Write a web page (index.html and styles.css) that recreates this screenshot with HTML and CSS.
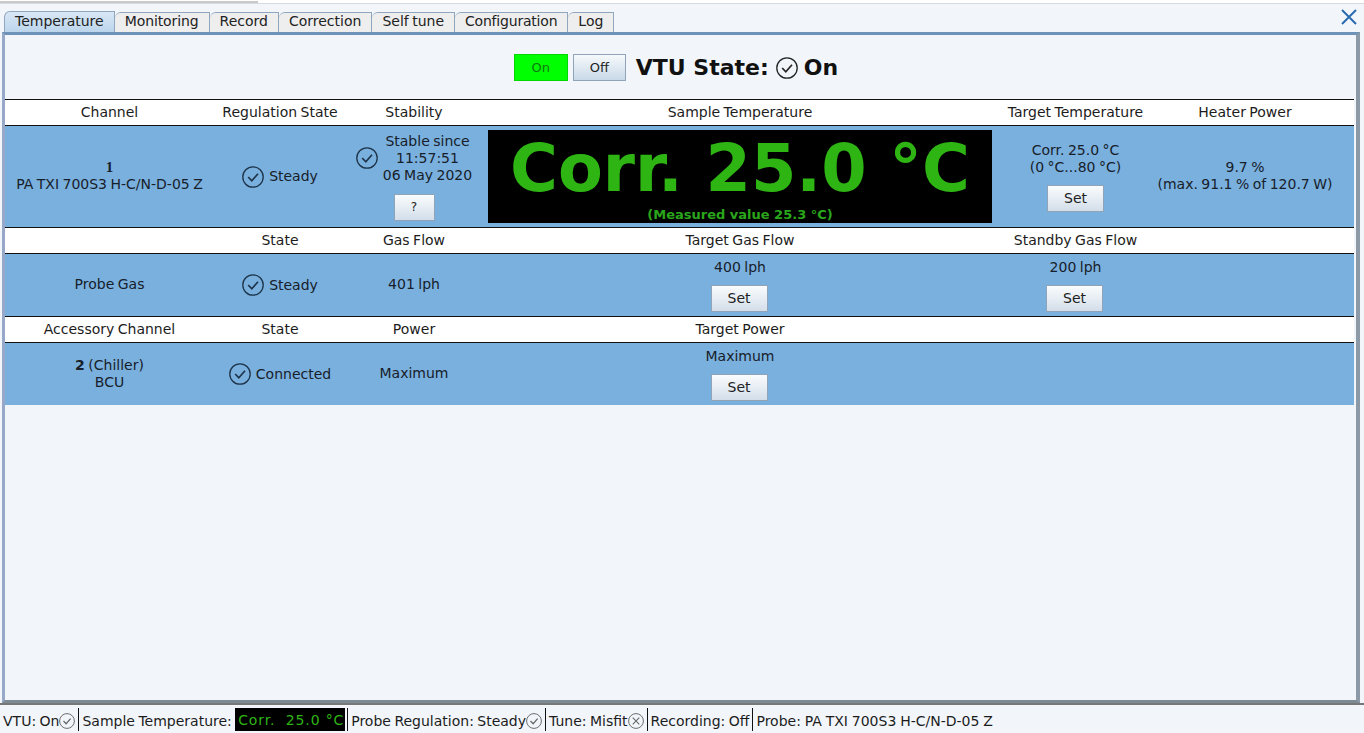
FILE: index.html
```html
<!DOCTYPE html>
<html lang="en">
<head>
    <meta charset="UTF-8">
    <title>VTU Control</title>
    <link rel="stylesheet" href="styles.css">
</head>
<body>
    <svg class="defs" width="0" height="0">
        <symbol id="ok" viewBox="0 0 22 22">
            <circle cx="11" cy="11" r="10.2" fill="none" stroke="currentColor" stroke-width="1.3"/>
            <path d="M6.2 11 L9.8 14.8 L16 7.8" fill="none" stroke="currentColor" stroke-width="1.7"/>
        </symbol>
        <symbol id="bad" viewBox="0 0 22 22">
            <circle cx="11" cy="11" r="10.2" fill="none" stroke="currentColor" stroke-width="1.3"/>
            <path d="M6.5 6.5 L15.5 15.5 M15.5 6.5 L6.5 15.5" fill="none" stroke="currentColor" stroke-width="1.5"/>
        </symbol>
    </svg>

    <div class="top-strip"></div>

    <nav class="tabs">
        <div class="tab active">Temperature</div>
        <div class="tab tab-mon">Monitoring</div>
        <div class="tab">Record</div>
        <div class="tab">Correction</div>
        <div class="tab">Self tune</div>
        <div class="tab tab-narrow">Configuration</div>
        <div class="tab">Log</div>
        <svg class="close" width="16" height="16" viewBox="0 0 16 16">
            <path d="M1 1 L15 15 M15 1 L1 15" stroke="#2a6cb0" stroke-width="2" fill="none"/>
        </svg>
    </nav>

    <main class="pane">
        <div class="state-bar">
            <button class="btn btn-on" type="button">On</button>
            <button class="btn btn-off" type="button">Off</button>
            <div class="vtu-state">VTU State: <svg class="icon-state"><use href="#ok"/></svg> On</div>
        </div>

        <div class="row head">
            <div>Channel</div>
            <div>Regulation State</div>
            <div>Stability</div>
            <div>Sample Temperature</div>
            <div>Target Temperature</div>
            <div>Heater Power</div>
        </div>
        <div class="row body body-main">
            <div class="plain"><b class="serif-num">1</b><br>PA TXI 700S3 H-C/N-D-05 Z</div>
            <div class="with-icon"><svg class="icon"><use href="#ok"/></svg>Steady</div>
            <div class="stack">
                <div class="stability">
                    <svg class="icon"><use href="#ok"/></svg>
                    <div>Stable since<br>11:57:51<br>06 May 2020</div>
                </div>
                <button class="btn btn-q" type="button">?</button>
            </div>
            <div class="display">
                <div class="display-big">Corr. 25.0 °C</div>
                <div class="display-small">(Measured value 25.3 °C)</div>
            </div>
            <div class="stack">
                <div>Corr. 25.0 °C<br>(0 °C...80 °C)</div>
                <button class="btn btn-set" type="button">Set</button>
            </div>
            <div class="plain">9.7 %<br>(max. 91.1 % of 120.7 W)</div>
        </div>

        <div class="row head">
            <div></div>
            <div>State</div>
            <div>Gas Flow</div>
            <div>Target Gas Flow</div>
            <div>Standby Gas Flow</div>
            <div></div>
        </div>
        <div class="row body body-sub">
            <div class="plain">Probe Gas</div>
            <div class="with-icon"><svg class="icon"><use href="#ok"/></svg>Steady</div>
            <div class="plain">401 lph</div>
            <div class="stack">
                <div>400 lph</div>
                <button class="btn btn-set" type="button">Set</button>
            </div>
            <div class="stack">
                <div>200 lph</div>
                <button class="btn btn-set" type="button">Set</button>
            </div>
            <div></div>
        </div>

        <div class="row head">
            <div>Accessory Channel</div>
            <div>State</div>
            <div>Power</div>
            <div>Target Power</div>
            <div></div>
            <div></div>
        </div>
        <div class="row body body-sub">
            <div><b>2</b> (Chiller)<br>BCU</div>
            <div class="with-icon"><svg class="icon"><use href="#ok"/></svg>Connected</div>
            <div class="plain">Maximum</div>
            <div class="stack">
                <div>Maximum</div>
                <button class="btn btn-set" type="button">Set</button>
            </div>
            <div></div>
            <div></div>
        </div>
    </main>

    <footer class="status">
        <div class="cell">VTU: On<svg class="icon-small"><use href="#ok"/></svg></div>
        <div class="cell">Sample Temperature: <span class="mini-display">Corr.&nbsp; 25.0 °C</span></div>
        <div class="cell">Probe Regulation: Steady<svg class="icon-small"><use href="#ok"/></svg></div>
        <div class="cell">Tune: Misfit<svg class="icon-small"><use href="#bad"/></svg></div>
        <div class="cell">Recording: Off</div>
        <div class="cell">Probe: PA TXI 700S3 H-C/N-D-05 Z</div>
    </footer>
</body>
</html>
```

FILE: styles.css
```css
html, body { margin: 0; height: 100%; }
body { width: 1364px; height: 733px; overflow: hidden; background-color: #F2F6FA; color: #1c1c1c; font-family: "DejaVu Sans", sans-serif; font-size: 14px; word-spacing: -1px; display: flex; flex-direction: column; }
.defs { position: absolute; }

.top-strip { height: 4px; background: linear-gradient(#c9c9c9, #c9c9c9) no-repeat 0 1px / 258px 2px, #fff; border-bottom: 1px solid #d5dade; box-sizing: border-box; flex: none; }

.tabs { height: 28px; display: flex; align-items: flex-end; padding-left: 4px; flex: none; position: relative; box-sizing: border-box; }
.tab { height: 19px; padding: 0 10px; line-height: 17px; background: #EEEEEE; border: 1px solid #8fa6bd; border-bottom: none; border-left: none; border-top-left-radius: 6px; color: #222; }
.tab.active { height: 20px; background: linear-gradient(#d9e7f5, #bcd5ec); border-left: 1px solid #8fa6bd; line-height: 19px; padding: 0 10px; }
.tab-mon { letter-spacing: -0.1px; }
.tab-narrow { letter-spacing: -0.2px; }
.close { position: absolute; right: 7px; top: 5px; }

.pane { flex: none; height: 671px; margin: 0 4px 0 2px; box-sizing: border-box; border-style: solid; border-width: 3px 4px 3px 3px; border-color: #6f93b8 #8b9aa6 #7d8a94 #98a8c8; }

.state-bar { height: 64px; display: flex; align-items: center; justify-content: center; padding: 1px 9px 0 0; box-sizing: border-box; }
.btn { font-family: inherit; font-size: 13px; color: #222; border: 1px solid #8fa4b8; padding: 0; background: linear-gradient(#fafcfd, #d3deea); }
.btn-on { width: 54px; height: 27px; background: #00FF00; border-color: #00d800; color: #0f7a0f; }
.btn-off { width: 53px; height: 27px; margin-left: 5px; background: linear-gradient(#f6f9fb, #c9d9e8); }
.vtu-state { margin-left: 10px; font-size: 22px; font-weight: bold; color: #111; word-spacing: 0; display: flex; align-items: center; gap: 6px; }
.icon-state { width: 22px; height: 22px; color: #222; margin-left: 1px; }

.row { display: grid; grid-template-columns: 209px 132px 136px 516px 155px 184px 17px; text-align: center; align-items: center; border-top: 1px solid #111; line-height: 17px; margin-right: 2px; }
.head { height: 24px; padding-bottom: 1px; background: #FFFFFF; }
.body { background-color: #7AB0DE; color: #17202a; }
.body-main { height: 101px; }
.body-sub { height: 62px; }
.body-sub .btn-set { margin-right: 2px; }

.plain { margin-bottom: 2px; }
.serif-num { font-family: "Liberation Serif", serif; font-size: 15px; }
.with-icon { display: flex; justify-content: center; align-items: center; gap: 5px; }
.icon { width: 22px; height: 22px; color: #1d3348; flex: none; }

.stability { display: flex; align-items: center; gap: 5px; }
.btn-q { width: 41px; height: 27px; margin-top: 10px; font-size: 12px; }

.display { margin: 0 6px; height: 93px; background: #000; color: #2EB514; overflow: hidden; word-spacing: 0; }
.display-big { font-size: 65.3px; font-weight: bold; line-height: 76px; white-space: nowrap; }
.display-small { font-size: 13px; font-weight: bold; line-height: 17px; color: #2aa61c; }

.stack { display: flex; flex-direction: column; align-items: center; }
.btn-set { width: 57px; height: 27px; margin-top: 9px; font-size: 14px; }

.status { flex: none; display: flex; align-items: flex-end; height: 29px; padding: 0 0 1px 3px; border-top: 2px solid #777; box-sizing: border-box; }
.cell { display: flex; align-items: center; white-space: pre; height: 23px; box-sizing: border-box; padding: 2px 3px 0 3px; border-right: 1px solid #111; }
.cell:first-child { padding-left: 0; }
.cell:last-child { border-right: none; word-spacing: -0.6px; }
.icon-small { width: 16px; height: 16px; color: #666; }
.mini-display { background: #000; color: #2EB514; height: 23px; line-height: 25px; margin: -2px -1px 0 0; padding: 0 1px 0 3px; letter-spacing: 0.85px; word-spacing: 0; overflow: hidden; }
```
